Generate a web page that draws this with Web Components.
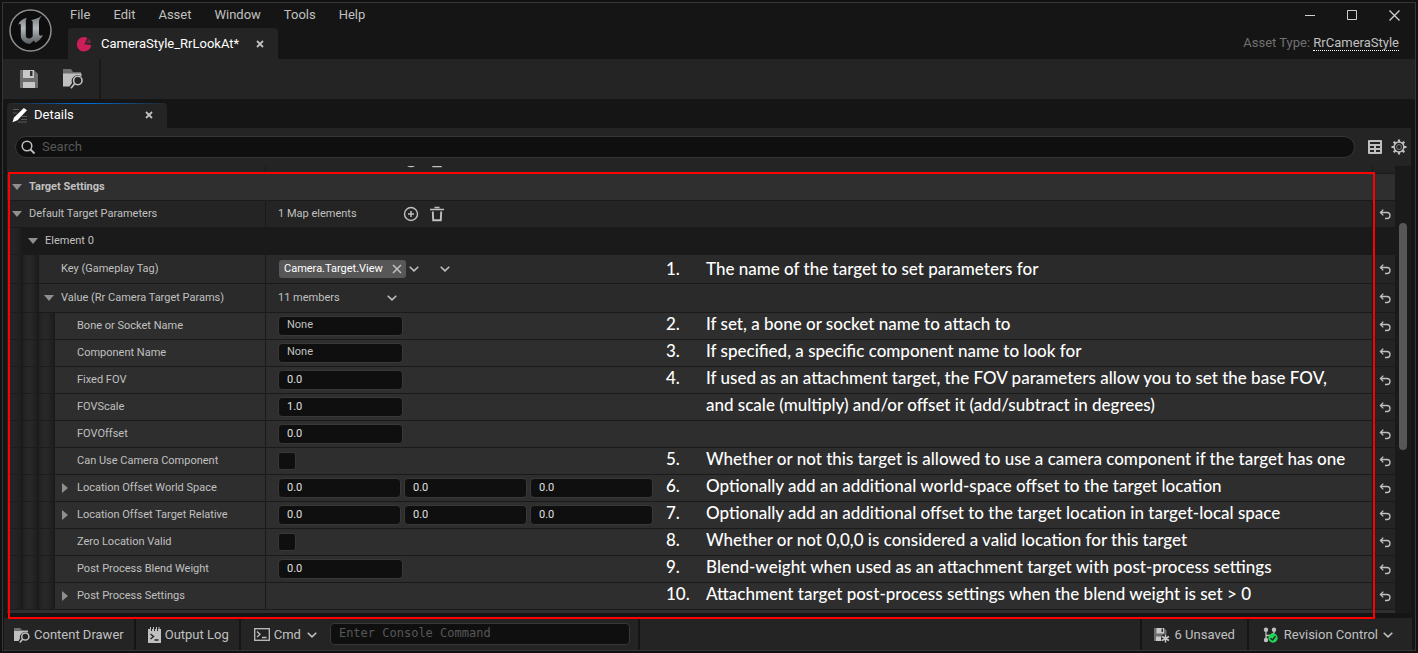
<!DOCTYPE html>
<html lang="en">
<head>
<meta charset="utf-8">
<title>CameraStyle_RrLookAt</title>
<style>
  html, body { margin: 0; height: 100%; background: #111; }
  body { font: 13px/16px Roboto, sans-serif; color: #c0c0c0; overflow: hidden; }
</style>
</head>
<body>
<ue-window>
  <ue-title-bar slot="title"></ue-title-bar>
  <ue-tool-bar slot="tools"></ue-tool-bar>
  <ue-details slot="panel">
    <ue-row kind="map" reset></ue-row>
    <ue-row label="Target Settings" kind="header" arrow="down"></ue-row>
    <ue-row label="Default Target Parameters" kind="map" arrow="down" text="1 Map elements" reset></ue-row>
    <ue-row label="Element 0" kind="element" depth="1" arrow="down"></ue-row>
    <ue-row label="Key (Gameplay Tag)" kind="tag" depth="2" text="Camera.Target.View" tall reset><ue-note num="1.">The name of the target to set parameters for</ue-note></ue-row>
    <ue-row label="Value (Rr Camera Target Params)" kind="members" depth="2" arrow="down" text="11 members" tall reset></ue-row>
    <ue-row label="Bone or Socket Name" kind="name" depth="3" text="None" reset><ue-note num="2.">If set, a bone or socket name to attach to</ue-note></ue-row>
    <ue-row label="Component Name" kind="name" depth="3" text="None" reset><ue-note num="3.">If specified, a specific component name to look for</ue-note></ue-row>
    <ue-row label="Fixed FOV" kind="number" depth="3" text="0.0" reset><ue-note num="4.">If used as an attachment target, the FOV parameters allow you to set the base FOV,</ue-note></ue-row>
    <ue-row label="FOVScale" kind="number" depth="3" text="1.0" reset><ue-note num="">and scale (multiply) and/or offset it (add/subtract in degrees)</ue-note></ue-row>
    <ue-row label="FOVOffset" kind="number" depth="3" text="0.0" reset></ue-row>
    <ue-row label="Can Use Camera Component" kind="check" depth="3" reset><ue-note num="5.">Whether or not this target is allowed to use a camera component if the target has one</ue-note></ue-row>
    <ue-row label="Location Offset World Space" kind="vector" depth="3" arrow="right" text="0.0" reset><ue-note num="6.">Optionally add an additional world-space offset to the target location</ue-note></ue-row>
    <ue-row label="Location Offset Target Relative" kind="vector" depth="3" arrow="right" text="0.0" reset><ue-note num="7.">Optionally add an additional offset to the target location in target-local space</ue-note></ue-row>
    <ue-row label="Zero Location Valid" kind="check" depth="3" reset><ue-note num="8.">Whether or not 0,0,0 is considered a valid location for this target</ue-note></ue-row>
    <ue-row label="Post Process Blend Weight" kind="number" depth="3" text="0.0" reset><ue-note num="9.">Blend-weight when used as an attachment target with post-process settings</ue-note></ue-row>
    <ue-row label="Post Process Settings" kind="none" depth="3" arrow="right" reset><ue-note num="10.">Attachment target post-process settings when the blend weight is set &gt; 0</ue-note></ue-row>
    <ue-row kind="header"></ue-row>
  </ue-details>
  <ue-status-bar slot="status"></ue-status-bar>
</ue-window>

<script>
const BASE = `:host,*{box-sizing:border-box}
button,input{font:inherit;color:inherit;margin:0;padding:0;border:0;background:none;outline:0}
button{display:inline-flex;align-items:center;justify-content:center}`;

function define(name, render) {
  customElements.define(name, class extends HTMLElement {
    constructor() { super(); this.attachShadow({ mode: 'open' }); }
    connectedCallback() {
      const t = document.createElement('template');
      t.innerHTML = render(this);
      this.shadowRoot.replaceChildren(t.content.cloneNode(true));
    }
  });
}

const ICONS = {
  logo: [43, 43, `<defs><linearGradient id="g" x1="0" y1="0" x2="0" y2="1"><stop offset="0" stop-color="#74797c"/><stop offset=".45" stop-color="#b4b8ba"/><stop offset="1" stop-color="#555a5e"/></linearGradient></defs>
    <circle cx="21.500" cy="21.500" r="20.500" fill="#0d0d0d" stroke="#8f8f8f" stroke-width="1.500"/>
    <path fill="url(#g)" d="M9 16C10.500 12 13.500 9.800 18.200 8.800C16.800 10 16.800 11.500 16.800 13V26.500C16.800 28.500 18.500 29.800 20.300 29.500C21.800 29.300 23 28.400 23.700 27.300V13.500C23.700 11.800 23 11.300 21.700 11C26 10.600 29.500 9.200 33 6.500C31 9 30 10.500 30 13V24.500C30 26.800 31.300 27.300 34 26C32 30 29.500 32.300 26.300 33.700L24.800 31.600L21 35C15.500 34.600 11.800 31 11.800 26.500V16.500C11.800 14.300 10.500 14.500 9 16Z"/>`],
  pie: [16, 16, `<path fill="#cc1f59" d="M8 1A7.300 7.300 0 1 0 15.300 9L8.300 8.300L11.500 1.900A7.300 7.300 0 0 0 8 1Z"/><path fill="#6b2640" d="M12.800 2.500L9.800 7.200L15.300 6.900A7.300 7.300 0 0 0 12.800 2.500Z"/>`],
  close: [8, 8, `<path d="M1 1L7 7M7 1L1 7" fill="none" stroke="#c0c0c0" stroke-width="1.800"/>`],
  save: [18, 18, `<path fill="#6f6f6f" d="M0 0H14L18 4V18H0Z"/><path fill="#c8c8c8" d="M3 0H14V8H3ZM3 12H15V18H3Z"/><path fill="#333" d="M10 1H12.500V6H10Z"/>`],
  folder: [21, 20, `<path fill="#6f6f6f" d="M0 0H8L10 3H18V5H0Z"/><path fill="#c0c0c0" d="M0 4.500H18.500V7.500A6 6 0 0 0 9 14L6.500 17.500H0Z"/><circle cx="14.800" cy="11.500" r="4.200" fill="none" stroke="#c0c0c0" stroke-width="1.600"/><path d="M11.800 14.500L8 19.300" stroke="#c0c0c0" stroke-width="1.700"/>`],
  drawer: [16, 16, `<path fill="#6f6f6f" d="M0 1H6L8 3H14V5H0Z"/><path fill="#c0c0c0" d="M0 4H14V5.500A5.500 5.500 0 0 0 6 11.500L4.500 14H0Z"/><circle cx="11.300" cy="9.500" r="3.600" fill="none" stroke="#c0c0c0" stroke-width="1.500"/><path d="M8.800 12L5.800 15.500" stroke="#c0c0c0" stroke-width="1.600"/>`],
  pencil: [16, 16, `<path d="M1 2.500H7M1 6H5M10 9.500H15M9 12.500H15M6 15H15" stroke="#5a5a5a"/><path fill="#fff" d="M11.800 1L15 3.300L5.500 13.300L.5 15.300L2 10.500Z"/>`],
  search: [16, 16, `<circle cx="7" cy="7" r="4.800" fill="none" stroke="#c0c0c0" stroke-width="1.500"/><path d="M10.500 10.500L14.500 14.500" stroke="#c0c0c0" stroke-width="1.800"/>`],
  table: [14, 14, `<rect width="14" height="14" rx="1" fill="#c0c0c0"/><path fill="#242424" d="M2 2H12V4H2ZM2 6H6V8H2ZM8 6H12V8H8ZM2 10H6V12H2ZM8 10H12V12H8Z"/>`],
  gear: [16, 16, `<g stroke="#c0c0c0" fill="none"><circle cx="8" cy="8" r="4.900" stroke-width="1.500"/><circle cx="8" cy="8" r="2.500" stroke="#777"/><path stroke-width="2.200" d="M8 .5V3M8 13V15.500M.5 8H3M13 8H15.500M2.700 2.700L4.400 4.400M11.600 11.600L13.300 13.300M2.700 13.300L4.400 11.600M11.600 4.400L13.300 2.700"/></g>`],
  down: [10, 6, `<path d="M0 0H10L5 6Z" fill="#8f8f8f"/>`],
  right: [6, 10, `<path d="M0 0V10L6 5Z" fill="#8f8f8f"/>`],
  chevron: [10, 6, `<path d="M.7 .7L5 4.900L9.300 .7" fill="none" stroke="#c0c0c0" stroke-width="1.500"/>`],
  plus: [16, 16, `<circle cx="8" cy="8" r="6.500" fill="none" stroke="#c0c0c0" stroke-width="1.400"/><path d="M8 5V11M5 8H11" stroke="#c0c0c0" stroke-width="1.500"/>`],
  trash: [14, 16, `<path d="M0 3.500H14M4.500 1.500H9.500" stroke="#c0c0c0" stroke-width="1.700"/><path d="M2.800 5.500L3.200 14.200H10.800L11.200 5.500" fill="none" stroke="#c0c0c0" stroke-width="1.900"/>`],
  x: [10, 10, `<path d="M1 1L9 9M9 1L1 9" stroke="#c0c0c0" stroke-width="1.500"/>`],
  undo: [12, 11, `<path d="M1.500 3.500H8A3 3 0 0 1 8 9.500H6M4.300 .6L1.400 3.500L4.300 6.400" fill="none" stroke="#c0c0c0" stroke-width="1.300"/>`],
  log: [13, 16, `<path fill="#c0c0c0" d="M0 2H2V0H3V4H4V2H5V0H6V4H7V2H8V0H9V4H10V2H10.500V0H11.500V2H13V16H0Z"/><path d="M2.500 7L5.500 9.500L2.500 12M6.500 13H10.500" fill="none" stroke="#242424" stroke-width="1.400"/>`],
  cmd: [16, 13, `<rect x=".7" y=".7" width="14.600" height="11.600" fill="none" stroke="#c0c0c0" stroke-width="1.300"/><path d="M3 3.500L6 6.300L3 9M8 9.500H12.500" fill="none" stroke="#c0c0c0" stroke-width="1.300"/>`],
  unsaved: [16, 16, `<path fill="#6f6f6f" d="M0 1H10L12.500 3.500V14H0Z"/><path fill="#c8c8c8" d="M2.500 1H10V6.500H2.500ZM2 9.500H8V14H2Z"/><path fill="#333" d="M7.500 1.500H9V5H7.500Z"/><circle cx="11.500" cy="11.500" r="4.500" fill="#242424"/><path d="M11.500 7.500V15.500M8 9.500L15 13.500M15 9.500L8 13.500" stroke="#c8c8c8" stroke-width="1.500"/>`],
  branch: [16, 16, `<g stroke="#c0c0c0" stroke-width="1.300"><path d="M3 3V13M11 3V6L7 8.500H3" fill="none"/><g fill="#c0c0c0" stroke="none"><circle cx="3" cy="2.800" r="2.200"/><circle cx="11" cy="2.800" r="2.200"/><circle cx="3" cy="13" r="2.200"/></g></g><circle cx="10" cy="11" r="4.700" fill="#1fd655"/><path d="M7.500 11.200L9.500 13L12.500 9.200" fill="none" stroke="#242424" stroke-width="1.400"/>`],
  min: [10, 10, `<path d="M0 5.500H10" stroke="#d0d0d0"/>`],
  max: [10, 10, `<path d="M.5 .5H9.500V9.500H.5Z" fill="none" stroke="#d0d0d0"/>`],
  quit: [11, 11, `<path d="M.5 .5L10.500 10.500M10.500 .5L.5 10.500" stroke="#d0d0d0" stroke-width="1.300"/>`]
};
define('ue-icon', el => {
  const [w, h, body] = ICONS[el.getAttribute('name')];
  return `<style>:host{display:inline-flex;flex:none}svg{display:block}</style>
    <svg width="${w}" height="${h}" viewBox="0 0 ${w} ${h}" aria-hidden="true">${body}</svg>`;
});

define('ue-window', () => `<style>${BASE}
  :host{display:block;height:100vh;padding:2px}
  .frame{height:100%;border:1px solid #363636;background:#151515;display:flex;flex-direction:column}
  slot[name=panel]{display:flex;flex:1;min-height:0}
  </style><div class="frame"><slot name="title"></slot><slot name="tools"></slot><slot name="panel"></slot><slot name="status"></slot></div>`);

define('ue-title-bar', () => `<style>${BASE}
  :host{display:flex;height:56px;flex:none}
  .logo{width:65px;padding:6px}
  .mid{flex:1;display:flex;flex-direction:column}
  nav{display:flex;gap:23px;padding:0 0 2px 2px;height:25px;align-items:center}
  .tab{display:flex;align-items:center;width:210px;height:31px;background:#242424;border-radius:4px 4px 0 0;color:#fff;padding:0 14px 0 8px}
  .tab span{flex:1;padding-left:9px}
  .side{display:flex;flex-direction:column;align-items:flex-end}
  .sys{display:flex}
  .sys button{width:42px;height:24px}
  .type{padding:8px 16px 0 0;color:#707070}
  a{color:#c0c0c0;text-decoration:none;border-bottom:1px dotted #fff;display:inline-block;line-height:15px}
  </style>
  <div class="logo"><ue-icon name="logo"></ue-icon></div>
  <div class="mid"><nav>${['File', 'Edit', 'Asset', 'Window', 'Tools', 'Help'].map(t => `<button>${t}</button>`).join('')}</nav>
    <div class="tab"><ue-icon name="pie"></ue-icon><span>CameraStyle_RrLookAt*</span><button aria-label="Close tab"><ue-icon name="close"></ue-icon></button></div></div>
  <div class="side"><div class="sys"><button aria-label="Minimize"><ue-icon name="min"></ue-icon></button><button aria-label="Maximize"><ue-icon name="max"></ue-icon></button><button aria-label="Close"><ue-icon name="quit"></ue-icon></button></div>
    <div class="type">Asset Type: <a href="#">RrCameraStyle</a></div></div>`);

define('ue-tool-bar', () => `<style>${BASE}
  :host{display:flex;flex:none;height:40px;background:#242424;align-items:stretch}
  div{display:flex;align-items:center;gap:25px;padding:0 15px 0 17px;border-right:2px solid #1a1a1a}
  </style><div><button aria-label="Save"><ue-icon name="save"></ue-icon></button><button aria-label="Browse"><ue-icon name="folder"></ue-icon></button></div>`);

define('ue-details', () => `<style>${BASE}
  :host{display:flex;flex-direction:column;flex:1;min-width:0;padding:4px 4px 5px;position:relative}
  .tab{position:relative;display:flex;align-items:center;width:160px;height:25px;background:#242424;color:#fff;border-radius:4px 4px 0 0;padding:0 14px 2px 5px;overflow:hidden;flex:none}
  .tab::before{content:"";position:absolute;inset:0 0 auto 0;height:1px;background:linear-gradient(90deg,#242424,#0070e0,#242424)}
  .tab span{flex:1;padding-left:6px}
  .bar{display:flex;align-items:center;height:38px;background:#242424;padding:0 4px 0 8px;flex:none}
  .box{flex:1;display:flex;align-items:center;gap:6px;height:22px;border:1px solid #363636;border-radius:11px;background:#0f0f0f;padding:0 4px;margin-right:13px}
  .box input{flex:1;height:18px;padding-bottom:2px}
  .box input::placeholder{color:#575757;opacity:1}
  .bar button+button{margin-left:9px}
  .scroll{flex:1;min-height:0;display:flex}
  .list{flex:1;min-width:0;overflow:hidden}
  .rows{margin-top:-19px}
  .track{width:16px;background:#1a1a1a;padding:57px 4px 0}
  .thumb{height:227px;border-radius:4px;background:#575757}
  .mark{position:absolute;left:5px;top:73px;right:40px;bottom:-1px;border:2px solid #f00;z-index:1;pointer-events:none}
  </style>
  <div class="tab"><ue-icon name="pencil"></ue-icon><span>Details</span><button aria-label="Close Details"><ue-icon name="close"></ue-icon></button></div>
  <div class="bar"><label class="box"><ue-icon name="search"></ue-icon><input type="text" placeholder="Search" aria-label="Search"></label>
    <button aria-label="Property matrix"><ue-icon name="table"></ue-icon></button><button aria-label="Settings"><ue-icon name="gear"></ue-icon></button></div>
  <div class="scroll"><div class="list"><div class="rows"><slot></slot></div></div><div class="track"><div class="thumb"></div></div></div>
  <div class="mark"></div>`);

define('ue-note', el => `<style>
  :host{display:flex;font:500 17px/22px Lato,sans-serif;color:#fff;white-space:nowrap}
  b{font-weight:inherit;width:40px;flex:none}
  </style><b>${el.getAttribute('num')}</b><span><slot></slot></span>`);

define('ue-row', el => {
  const at = n => el.getAttribute(n) || '';
  const kind = at('kind'), depth = +at('depth'), text = at('text'), label = at('label');
  const field = (cls, extra) => `<input class="field ${cls}" type="text" value="${text}" ${extra}>`;
  const btn = (icon, name) => `<button aria-label="${name}"><ue-icon name="${icon}"></ue-icon></button>`;
  const value = {
    header: '', element: '', none: '',
    map: `<span class="txt">${text}</span>${btn('plus', 'Add element')}${btn('trash', 'Delete all')}`,
    members: `<span class="txt members">${text}</span>${btn('chevron', 'Member options')}`,
    tag: `<span class="chip">${text}${btn('x', 'Clear tag')}</span>${btn('chevron', 'Choose tag')}<span class="gap"></span>${btn('chevron', 'Key options')}`,
    name: field('name', 'id="f"'),
    number: field('', 'id="f"'),
    check: '<input id="f" type="checkbox">',
    vector: field('v', 'id="f"') + field('v', `aria-label="${label} Y"`) + field('v', `aria-label="${label} Z"`)
  }[kind];
  const wide = kind === 'header' || kind === 'element';
  const bg = kind === 'header' ? '#2f2f2f' : kind === 'element' ? '#1a1a1a' : ['#242424', '#242424', '#2a2a2a', '#2e2e2e'][depth];
  const tied = /id="f"/.test(value);
  return `<style>${BASE}
  :host{display:flex;height:27px;font-size:11px;line-height:14px}
  :host([tall]){height:29px}
  .ind{width:16px;border-right:1px solid #1a1a1a;border-bottom:1px solid #1c1c1c;background:linear-gradient(90deg,#242424 60%,#1c1c1c);flex:none}
  .ind+.ind{background:linear-gradient(90deg,#202020,#272727 30%,#272727 55%,#1c1c1c)}
  .name-cell{width:${259 - depth * 16}px;flex:none;display:flex;align-items:center;background:${bg};border-right:1px solid ${wide ? bg : '#1a1a1a'};border-bottom:1px solid #1a1a1a;white-space:nowrap}
  .arrow{width:22px;padding-right:2px;display:flex;justify-content:center;flex:none}
  .name-cell label,.name-cell span{padding-bottom:1px;font-weight:${kind === 'header' ? 700 : 400}}
  .value{flex:1;min-width:0;display:flex;align-items:center;background:${bg};border-bottom:1px solid #1a1a1a;border-right:1px solid ${wide ? bg : '#1a1a1a'};padding-left:12px}
  .controls{width:388px;flex:none;display:flex;align-items:center}
  .note{padding-bottom:4px}
  :host([tall]) .note{padding-bottom:0}
  .reset{width:22px;flex:none;display:flex;align-items:center;justify-content:center;padding-left:2px;background:${wide ? bg : '#242424'};border-bottom:1px solid ${kind === 'element' ? bg : '#1a1a1a'}}
  .field{width:125px;height:20px;border:1px solid #383838;border-radius:4px;background:#0f0f0f;padding:0 8px 1px;flex:none;color:#e0e0e0}
  .field.name{padding-bottom:4px;color:#c0c0c0}
  .field.v{width:123px;margin-right:3px}
  input[type=checkbox]{appearance:none;width:18px;height:18px;border:1px solid #383838;border-radius:3px;background:#0f0f0f}
  .txt{width:125px;padding-bottom:1px}
  .txt.members{width:109px}
  .txt~button+button{margin-left:11px}
  .chip{display:flex;align-items:center;justify-content:space-between;width:127px;height:18px;margin:0 3px 0 1px;padding:0 4px 0 5px;border-radius:3px;background:#575757;color:#fff}
  .gap{width:21px}
  </style>
  ${'<div class="ind"></div>'.repeat(depth)}
  <div class="name-cell"><div class="arrow">${at('arrow') ? `<ue-icon name="${at('arrow')}"></ue-icon>` : ''}</div>${tied ? `<label for="f">${label}</label>` : `<span>${label}</span>`}</div>
  <div class="value"><div class="controls">${value}</div><div class="note"><slot></slot></div></div>
  <div class="reset">${el.hasAttribute('reset') ? btn('undo', 'Reset to default') : ''}</div>`;
});

define('ue-status-bar', () => `<style>${BASE}
  :host{display:flex;flex:none;height:32px;margin:0 3px 0 1px;background:#242424}
  .item{display:flex;align-items:center;gap:4px;padding:1px 10px 0;border-right:2px solid #151515;white-space:nowrap;height:100%}
  .log{padding-left:12px}
  .wide{padding:0 8px 0 13px}
  .cmd{display:flex;align-items:center;gap:4px;margin-right:9px;padding-top:1px}
  .cmd span{padding-right:2px}
  .end{border-right:0;border-left:2px solid #151515;padding:1px 12px 0;gap:5px}
  .last{padding:1px 19px 0 14px}
  .fill{flex:1}
  .console{width:300px;height:22px;border:1px solid #383838;border-radius:4px;background:#0f0f0f;padding:0 8px 2px;font:12px/16px "DejaVu Sans Mono",monospace}
  .console::placeholder{color:#575757;opacity:1}
  </style>
  <button class="item"><ue-icon name="drawer"></ue-icon>Content Drawer</button>
  <button class="item log"><ue-icon name="log"></ue-icon>Output Log</button>
  <div class="item wide"><button class="cmd"><ue-icon name="cmd"></ue-icon><span>Cmd</span><ue-icon name="chevron"></ue-icon></button><input class="console" type="text" placeholder="Enter Console Command" aria-label="Console command"></div>
  <div class="fill"></div>
  <button class="item end"><ue-icon name="unsaved"></ue-icon>6 Unsaved</button>
  <button class="item end last"><ue-icon name="branch"></ue-icon>Revision Control<ue-icon name="chevron"></ue-icon></button>`);
</script>
</body>
</html>
